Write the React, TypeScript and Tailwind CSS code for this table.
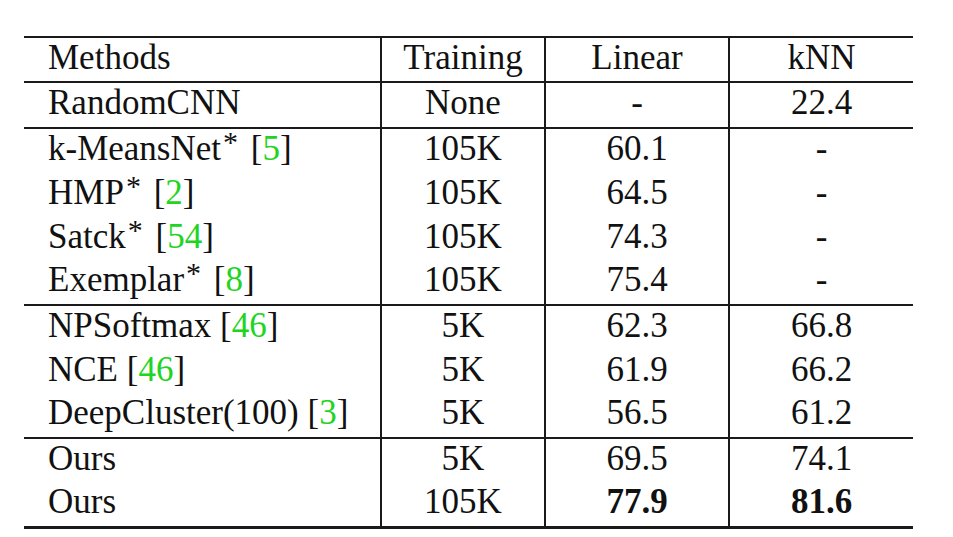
import React from "react";

type Cell = React.ReactNode;
type Row = [Cell, Cell, Cell, Cell];

const Ref = ({ n }: { n: string }) => (
  <>
    {" "}[<span className="text-[#22d422]">{n}</span>]
  </>
);

const Star = () => (
  <span className="relative top-[-8px] text-[30px] leading-none ml-[2px] mr-[4px]">*</span>
);

const groups: { rows: Row[]; h: string; last?: boolean }[] = [
  { rows: [["Methods", "Training", "Linear", "kNN"]], h: "h-[43px]" },
  { rows: [["RandomCNN", "None", "-", "22.4"]], h: "h-[44px]" },
  {
    rows: [
      [<>k-MeansNet<Star /><Ref n="5" /></>, "105K", "60.1", "-"],
      [<>HMP<Star /><Ref n="2" /></>, "105K", "64.5", "-"],
      [<>Satck<Star /><Ref n="54" /></>, "105K", "74.3", "-"],
      [<>Exemplar<Star /><Ref n="8" /></>, "105K", "75.4", "-"],
    ],
    h: "h-[43.75px]",
  },
  {
    rows: [
      [<>NPSoftmax<Ref n="46" /></>, "5K", "62.3", "66.8"],
      [<>NCE<Ref n="46" /></>, "5K", "61.9", "66.2"],
      [<>DeepCluster(100)<Ref n="3" /></>, "5K", "56.5", "61.2"],
    ],
    h: "h-[43.67px]",
  },
  {
    rows: [
      ["Ours", "5K", "69.5", "74.1"],
      ["Ours", "105K", <span className="font-bold">77.9</span>, <span className="font-bold">81.6</span>],
    ],
    h: "h-[43.5px]",
    last: true,
  },
];

const cellBase = "h-full pt-[2px] leading-none whitespace-nowrap";

export default function App() {
  return (
    <div
      className="w-[953px] h-[537px] bg-white text-[#111] overflow-hidden"
      style={{ fontFamily: '"Liberation Serif", "Times New Roman", serif' }}
    >
      <div className="pt-[36px] pl-[24px]">
        <div className="w-[889px] border-t-2 border-[#1a1a1a] text-[35px]">
          {groups.map((g, gi) => (
            <div
              key={gi}
              className={
                g.last
                  ? "border-b-[3px] border-[#1a1a1a]"
                  : "border-b-2 border-[#1a1a1a]"
              }
            >
              {g.rows.map((r, ri) => (
                <div key={ri} className={"flex " + g.h}>
                  <div className={cellBase + " w-[356px] pl-[24px]"}>{r[0]}</div>
                  <div className={cellBase + " w-[164px] text-center border-l-2 border-[#1a1a1a]"}>{r[1]}</div>
                  <div className={cellBase + " w-[184px] text-center border-l-2 border-[#1a1a1a]"}>{r[2]}</div>
                  <div className={cellBase + " w-[185px] text-center border-l-2 border-[#1a1a1a]"}>{r[3]}</div>
                </div>
              ))}
            </div>
          ))}
        </div>
      </div>
    </div>
  );
}
